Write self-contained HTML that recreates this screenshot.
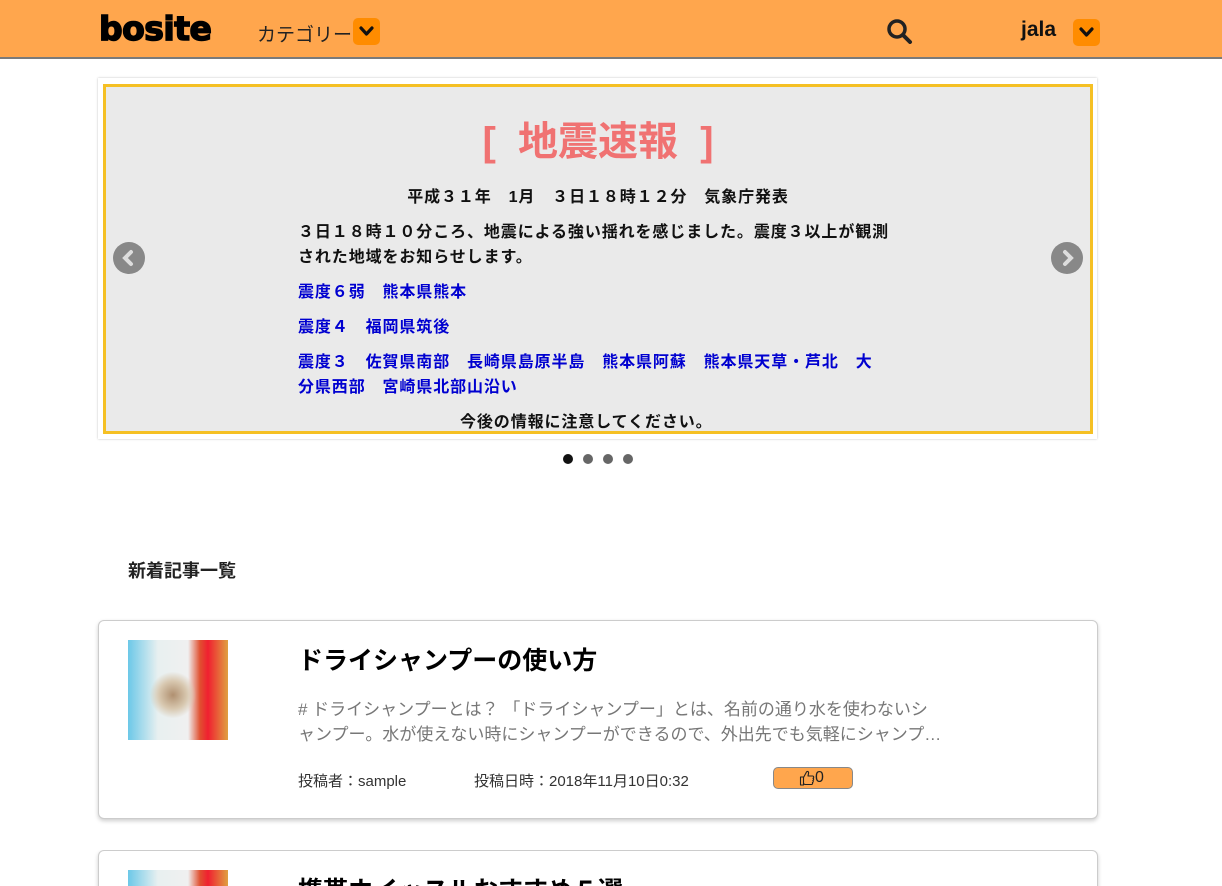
<!DOCTYPE html>
<html><head><meta charset="utf-8"><style>
html,body{margin:0;height:886px;overflow:hidden}
body{background:#fff;font-family:"Liberation Sans","Noto Sans CJK JP",sans-serif;width:1222px;position:relative}
.hdr{position:absolute;left:0;top:0;width:1222px;height:57px;background:#FFA64D;border-bottom:2px solid #7a7a7a}
.logo{position:absolute;left:99px;top:9px;font-size:33px;font-weight:900;letter-spacing:-0.5px;color:#000;font-family:"DejaVu Sans","Liberation Sans",sans-serif;-webkit-text-stroke:1.5px #000}
.dd{position:absolute;width:27px;height:27px;background:#FF8C00;border-radius:5px}
.dd svg{position:absolute;left:6px;top:8px}
.abs{position:absolute}
.slide{position:absolute;left:98px;top:78px;width:999px;height:361px;background:#fff;box-shadow:0 0 2px rgba(0,0,0,.25)}
.inner{position:absolute;left:103px;top:84px;width:984px;height:344px;border:3px solid #F5C024;background:#EAEAEA}
.arrow{position:absolute;width:32px;height:32px;border-radius:50%;background:#888}
.t{position:absolute;font-size:16px;font-weight:bold;color:#111;white-space:nowrap;letter-spacing:0.9px}
.b{color:#0000D0}
.dot{position:absolute;top:454px;width:10px;height:10px;border-radius:50%;background:#666}
.card{position:absolute;left:98px;width:998px;height:197px;border:1px solid #ccc;border-radius:6px;background:#fff;box-shadow:0 2px 4px rgba(0,0,0,.2)}
.img{position:absolute;width:100px;height:100px;background:radial-gradient(circle at 45% 55%,#b09070 0,#d8c8b0 18%,transparent 30%),linear-gradient(90deg,#6cc8e8 0%,#e8f0f0 30%,#f0f0f0 60%,#e05030 72%,#f02030 80%,#e0a040 100%)}
</style></head><body>
<div class="hdr">
 <div class="logo">bosite</div>
 <div class="abs" style="left:257px;top:20px;font-size:19px;color:#222">カテゴリー</div>
 <div class="dd" style="left:353px;top:18px"><svg width="15" height="11" viewBox="0 0 15 11"><path d="M2 2 L7.5 8 L13 2" stroke="#111" stroke-width="3.2" fill="none" stroke-linecap="round" stroke-linejoin="round"/></svg></div>
 <svg class="abs" style="left:886px;top:18px" width="28" height="26" viewBox="0 0 28 26"><circle cx="11" cy="11" r="8" stroke="#222" stroke-width="3.5" fill="none"/><path d="M17 17 L24 24" stroke="#222" stroke-width="4" stroke-linecap="round"/></svg>
 <div class="abs" style="left:1021px;top:18px;font-size:21px;font-weight:bold;color:#111">jala</div>
 <div class="dd" style="left:1073px;top:19px"><svg width="15" height="11" viewBox="0 0 15 11"><path d="M2 2 L7.5 8 L13 2" stroke="#111" stroke-width="3.2" fill="none" stroke-linecap="round" stroke-linejoin="round"/></svg></div>
</div>
<div class="slide"></div>
<div class="inner"></div>
<div class="arrow" style="left:113px;top:242px"><svg width="32" height="32"><path d="M18 10 L12 16 L18 22" stroke="#ddd" stroke-width="4" fill="none" stroke-linecap="round"/></svg></div>
<div class="arrow" style="left:1051px;top:242px"><svg width="32" height="32"><path d="M14 10 L20 16 L14 22" stroke="#ddd" stroke-width="4" fill="none" stroke-linecap="round"/></svg></div>
<div class="abs" style="left:0;width:1196px;top:109px;text-align:center;font-size:40px;font-weight:bold;color:#F07272;white-space:pre">[  地震速報  ]</div>
<div class="t" style="left:0;width:1196px;text-align:center;top:183px">平成３１年　1月　３日１８時１２分　気象庁発表</div>
<div class="t" style="left:298px;top:218px">３日１８時１０分ころ、地震による強い揺れを感じました。震度３以上が観測</div>
<div class="t" style="left:298px;top:243px">された地域をお知らせします。</div>
<div class="t b" style="left:298px;top:278px">震度６弱　熊本県熊本</div>
<div class="t b" style="left:298px;top:313px">震度４　福岡県筑後</div>
<div class="t b" style="left:298px;top:348px">震度３　佐賀県南部　長崎県島原半島　熊本県阿蘇　熊本県天草・芦北　大</div>
<div class="t b" style="left:298px;top:373px">分県西部　宮崎県北部山沿い</div>
<div class="t" style="left:460px;top:408px">今後の情報に注意してください。</div>
<div class="dot" style="left:563px;background:#111"></div><div class="dot" style="left:583px"></div><div class="dot" style="left:603px"></div><div class="dot" style="left:623px"></div>
<div class="abs" style="left:128px;top:557px;font-size:18px;font-weight:bold;color:#222">新着記事一覧</div>
<div class="card" style="top:620px"></div>
<div class="img" style="left:128px;top:640px"></div>
<div class="abs" style="left:298px;top:641px;font-size:25px;font-weight:bold;color:#000">ドライシャンプーの使い方</div>
<div class="abs" style="left:298px;top:697px;font-size:17px;color:#777;line-height:25px;width:660px">#&nbsp;ドライシャンプーとは？ 「ドライシャンプー」とは、名前の通り水を使わないシ<br>ャンプー。水が使えない時にシャンプーができるので、外出先でも気軽にシャンプ…</div>
<div class="abs" style="left:298px;top:770px;font-size:15px;color:#333">投稿者：sample</div>
<div class="abs" style="left:474px;top:770px;font-size:15px;color:#333">投稿日時：2018年11月10日0:32</div>
<div class="abs" style="left:773px;top:767px;width:78px;height:20px;background:#FFA64D;border:1px solid #888;border-radius:5px;font-size:16px;line-height:20px;color:#222">
 <svg class="abs" style="left:25px;top:2px" width="16" height="16" viewBox="0 0 16 16"><path d="M1.5 7 H4.5 V15 H1.5 Z M4.5 7.5 L7.5 2 C8.5 1 10 1.5 9.5 3.5 L9 6 H13.5 C15 6 15 8 14 8.3 C15 8.8 14.8 10.2 13.8 10.4 C14.6 11 14.3 12.3 13.4 12.5 C14 13.2 13.5 14.5 12.5 14.5 H6 L4.5 13.8" stroke="#222" stroke-width="1.1" fill="none" stroke-linejoin="round"/></svg>
 <span class="abs" style="left:41px;top:0">0</span></div>
<div class="abs" style="left:0;top:850px;width:1222px;height:36px;overflow:hidden">
 <div class="card" style="top:0"></div>
 <div class="img" style="left:128px;top:20px"></div>
 <div class="abs" style="left:298px;top:21px;font-size:25px;font-weight:bold;color:#000">携帯ホイッスルおすすめ５選</div>
</div>
</body></html>
